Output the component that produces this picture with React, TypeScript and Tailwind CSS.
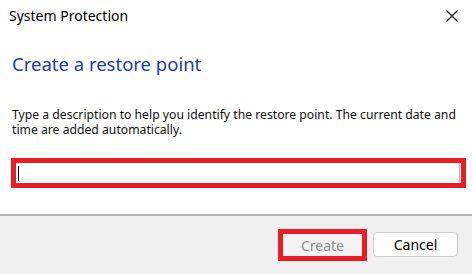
export default function App() {
  return (
    <div className="w-[472px] h-[274px] bg-white flex flex-col overflow-hidden font-['Noto_Sans','Open_Sans',sans-serif] text-black">
      {/* title bar */}
      <div className="h-[33px] flex items-start justify-between pl-[9px] pr-[14px] pt-[6px]">
        <span className="text-[14px] leading-[20px]">System Protection</span>
        <svg className="mt-[4px]" width="12" height="12" viewBox="0 0 12 12" fill="none" stroke="#1a1a1a" strokeWidth="1.1">
          <path d="M0.5 0.5 L11.5 11.5 M11.5 0.5 L0.5 11.5" />
        </svg>
      </div>

      {/* main */}
      <div className="pl-[12px] pt-[18px]">
        <h1 className="text-[18.5px] leading-[26px] text-[#1d3da3]">Create a restore point</h1>
        <p className="mt-[30px] text-[12.2px] leading-[15px] text-[#111] whitespace-nowrap">
          Type a description to help you identify the restore point. The current date and
          <br />
          time are added automatically.
        </p>
      </div>

      <div className="mt-[21px] ml-[11px] w-[455px] h-[30px] border-[5px] border-[#ed1c24]">
        <div className="h-full bg-white border-r border-[#b8b8b8] mr-[1px] flex items-center pl-[2px]">
          <div className="w-[1px] h-[15px] bg-black" />
        </div>
      </div>

      <div className="flex-1" />

      {/* footer */}
      <div className="h-[60px] shrink-0 bg-[#f0f0f0] border-t-2 border-[#b4b4b4] flex items-start justify-end pr-[14px] pt-[13px] gap-[6px] text-[14px]">
        <div className="w-[89px] h-[32px] border-[5px] border-[#ed1c24] bg-[#f3f3f3] flex items-center justify-center text-[#8c8c8c]">
          Create
        </div>
        <button className="mt-[3px] w-[85px] h-[25px] rounded-[4px] border border-[#cfcfcf] bg-[#fcfcfc] flex items-center justify-center text-black">
          Cancel
        </button>
      </div>
    </div>
  );
}
